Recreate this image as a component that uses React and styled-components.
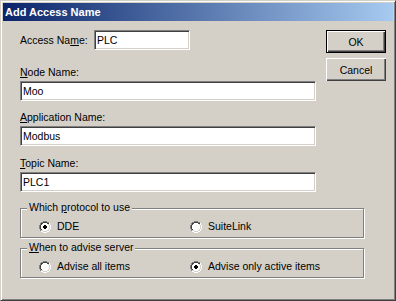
import React from "react";
import styled, { createGlobalStyle } from "styled-components";

const Global = createGlobalStyle`
  html, body { margin: 0; padding: 0; background: #d4d0c8; }
  body { font-family: "Liberation Sans", Arial, sans-serif; font-size: 10.5px; color: #000; }
`;

const Window = styled.div`
  width: 396px;
  height: 301px;
  box-sizing: border-box;
  background: #d4d0c8;
  border: 1px solid;
  border-color: #d4d0c8 #404040 #404040 #d4d0c8;
  box-shadow: inset 1px 1px 0 #fff, inset -1px -1px 0 #808080;
  padding: 2px;
  display: flex;
  flex-direction: column;
`;

const TitleBar = styled.div`
  height: 18px;
  flex: none;
  display: flex;
  align-items: center;
  padding-left: 2px;
  background: linear-gradient(to right, #0a246a, #a6caf0);
  color: #fff;
  font-weight: bold;
  font-size: 11px;
  letter-spacing: 0;
`;

const Body = styled.div`
  display: flex;
  flex-direction: column;
  padding: 9px 0 0 17px;
`;

const Top = styled.div`
  display: flex;
  align-items: flex-start;
`;

const Fields = styled.div`
  width: 296px;
  display: flex;
  flex-direction: column;
`;

const InlineRow = styled.div`
  display: flex;
  align-items: center;
  height: 20px;
`;

const InlineLabel = styled.label`
  width: 74px;
  flex: none;
  line-height: 13px;
`;

const FieldLabel = styled.label`
  display: block;
  line-height: 13px;
  margin-top: ${(p) => p.$gap}px;
  margin-bottom: 2px;
`;

const TextBox = styled.input`
  box-sizing: border-box;
  width: ${(p) => p.$w || 296}px;
  height: 20px;
  margin: 0;
  padding: 0 2px;
  font-family: "Liberation Sans", Arial, sans-serif;
  font-size: 10.5px;
  color: #000;
  background: #fff;
  border: 1px solid;
  border-color: #808080 #fff #fff #808080;
  box-shadow: inset 1px 1px 0 #404040, inset -1px -1px 0 #d4d0c8;
  outline: none;
  border-radius: 0;
`;

const Buttons = styled.div`
  margin-left: 10px;
  display: flex;
  flex-direction: column;
  gap: 5px;
`;

const Button = styled.button`
  box-sizing: border-box;
  width: 60px;
  height: 23px;
  margin: 0;
  padding: 0;
  font-family: "Liberation Sans", Arial, sans-serif;
  font-size: 10.5px;
  color: #000;
  background: #d4d0c8;
  border-radius: 0;
  border: ${(p) => (p.$default ? "1px solid #000" : "none")};
  box-shadow: inset 1px 1px 0 #fff, inset -1px -1px 0 #404040, inset -2px -2px 0 #808080;
`;

const Group = styled.div`
  position: relative;
  box-sizing: border-box;
  width: 344px;
  height: 30px;
  margin-top: ${(p) => p.$gap}px;
  border: 1px solid #808080;
  box-shadow: 1px 1px 0 #fff, inset 1px 1px 0 #fff;
  padding: 11px 0 0 18px;
  display: grid;
  grid-template-columns: 151px 1fr;
  align-content: start;
`;

const Legend = styled.span`
  position: absolute;
  top: -8px;
  left: 6px;
  padding: 0 2px;
  line-height: 13px;
  background: #d4d0c8;
`;

const RadioItem = styled.label`
  display: flex;
  align-items: center;
  gap: 6px;
  height: 13px;
  line-height: 13px;
`;

const Key = styled.span`
  text-decoration: underline;
`;

const px = (cells, color) =>
  cells.map(([r, c0, c1], i) => (
    <rect key={color + i} x={c0} y={r} width={c1 - c0 + 1} height={1} fill={color} />
  ));

const Radio = ({ checked }) => (
  <svg width="12" height="12" viewBox="0 0 12 12" shapeRendering="crispEdges" style={{ flex: "none" }}>
    {px(
      [
        [0, 4, 7],
        [1, 2, 3],
        [1, 8, 9],
        [2, 1, 1],
        [3, 1, 1],
        [4, 0, 0],
        [5, 0, 0],
        [6, 0, 0],
        [7, 0, 0],
        [8, 1, 1],
        [9, 1, 1],
      ],
      "#808080"
    )}
    {px(
      [
        [2, 10, 10],
        [3, 10, 10],
        [4, 11, 11],
        [5, 11, 11],
        [6, 11, 11],
        [7, 11, 11],
        [8, 10, 10],
        [9, 10, 10],
        [10, 2, 3],
        [10, 8, 9],
        [11, 4, 7],
      ],
      "#ffffff"
    )}
    {px(
      [
        [1, 4, 7],
        [2, 2, 3],
        [2, 8, 9],
        [3, 2, 2],
        [4, 1, 1],
        [5, 1, 1],
        [6, 1, 1],
        [7, 1, 1],
        [8, 2, 2],
      ],
      "#404040"
    )}
    {px(
      [
        [3, 9, 9],
        [4, 10, 10],
        [5, 10, 10],
        [6, 10, 10],
        [7, 10, 10],
        [8, 9, 9],
        [9, 2, 3],
        [9, 8, 9],
        [10, 4, 7],
      ],
      "#d4d0c8"
    )}
    {px(
      [
        [2, 4, 7],
        [3, 3, 8],
        [4, 2, 9],
        [5, 2, 9],
        [6, 2, 9],
        [7, 2, 9],
        [8, 3, 8],
        [9, 4, 7],
      ],
      "#ffffff"
    )}
    {checked &&
      px(
        [
          [4, 5, 6],
          [5, 4, 7],
          [6, 4, 7],
          [7, 5, 6],
        ],
        "#000000"
      )}
  </svg>
);

export default function App() {
  return (
    <>
      <Global />
      <Window>
        <TitleBar>Add Access Name</TitleBar>
        <Body>
          <Top>
            <Fields>
              <InlineRow>
                <InlineLabel>
                  Access Na<Key>m</Key>e:
                </InlineLabel>
                <TextBox $w={96} defaultValue="PLC" readOnly />
              </InlineRow>
              <FieldLabel $gap={16}>
                <Key>N</Key>ode Name:
              </FieldLabel>
              <TextBox defaultValue="Moo" readOnly />
              <FieldLabel $gap={10}>
                <Key>A</Key>pplication Name:
              </FieldLabel>
              <TextBox defaultValue="Modbus" readOnly />
              <FieldLabel $gap={11}>
                <Key>T</Key>opic Name:
              </FieldLabel>
              <TextBox defaultValue="PLC1" readOnly />
            </Fields>
            <Buttons>
              <Button $default>OK</Button>
              <Button>Cancel</Button>
            </Buttons>
          </Top>
          <Group $gap={16}>
            <Legend>
              Which <Key>p</Key>rotocol to use
            </Legend>
            <RadioItem>
              <Radio checked />
              DDE
            </RadioItem>
            <RadioItem>
              <Radio />
              SuiteLink
            </RadioItem>
          </Group>
          <Group $gap={10}>
            <Legend>
              <Key>W</Key>hen to advise server
            </Legend>
            <RadioItem>
              <Radio />
              Advise all items
            </RadioItem>
            <RadioItem>
              <Radio checked />
              Advise only active items
            </RadioItem>
          </Group>
        </Body>
      </Window>
    </>
  );
}
